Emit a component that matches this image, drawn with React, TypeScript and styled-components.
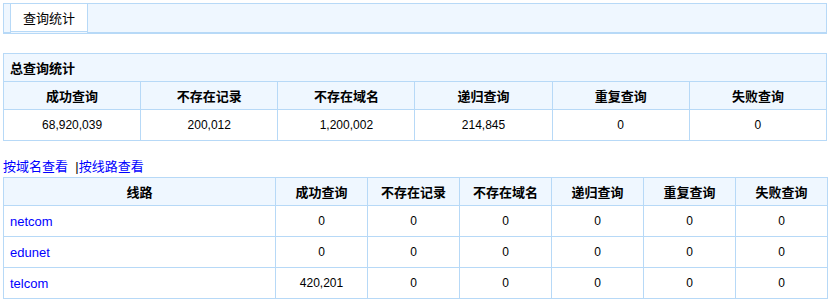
import React from "react";
import styled, { createGlobalStyle } from "styled-components";

const BORDER = "#b7d9f7";
const HEAD_BG = "#eff7ff";

const Global = createGlobalStyle`
  html, body { margin: 0; padding: 0; background: #fff; }
  body {
    font-family: "Liberation Sans", "Noto Sans CJK SC", sans-serif;
    font-size: 13px;
    color: #000;
  }
`;

const Page = styled.div`
  padding: 3px;
  width: 824px;
`;

const TabBar = styled.div`
  display: flex;
  border: 1px solid ${BORDER};
  background: ${HEAD_BG};
  height: 29px;
`;

const StripCell = styled.div<{ $w?: number; $grow?: boolean }>`
  flex: ${(p) => (p.$grow ? "1 1 auto" : `0 0 ${p.$w}px`)};
  height: 28px;
  border-bottom: 1px solid ${BORDER};
`;

const Tab = styled.div`
  flex: 0 0 76px;
  border-left: 1px solid ${BORDER};
  border-right: 1px solid ${BORDER};
  height: 30px;
`;

const TabLabel = styled.div`
  height: 27px;
  background: #fff;
  border-bottom: 1px solid ${BORDER};
  display: flex;
  align-items: center;
  justify-content: center;
  font-size: 13px;
`;

const Table = styled.table<{ $mt: number }>`
  margin-top: ${(p) => p.$mt}px;
  width: 824px;
  border-collapse: collapse;
  table-layout: fixed;
  border: 1px solid ${BORDER};
`;

const TitleCell = styled.td`
  background: ${HEAD_BG};
  border: 1px solid ${BORDER};
  height: 27px;
  padding: 0 0 0 6px;
  font-weight: bold;
  font-size: 13px;
  text-align: left;
`;

const Th = styled.th`
  background: ${HEAD_BG};
  border: 1px solid ${BORDER};
  height: 27px;
  padding: 0;
  font-weight: bold;
  font-size: 13px;
  text-align: center;
`;

const Td = styled.td<{ $left?: boolean }>`
  border: 1px solid ${BORDER};
  height: 30px;
  padding: 0 0 0 ${(p) => (p.$left ? "6px" : "0")};
  text-align: ${(p) => (p.$left ? "left" : "center")};
  font-size: 12px;
`;

const Link = styled.a`
  color: #0000ff;
  text-decoration: none;
  font-size: 13px;
  cursor: pointer;
`;

const LinkBar = styled.div`
  margin-top: 16px;
  height: 20px;
  line-height: 20px;
  font-size: 13px;
`;

const cols = ["成功查询", "不存在记录", "不存在域名", "递归查询", "重复查询", "失败查询"];
const totals = ["68,920,039", "200,012", "1,200,002", "214,845", "0", "0"];
const lines = [
  { name: "netcom", v: ["0", "0", "0", "0", "0", "0"] },
  { name: "edunet", v: ["0", "0", "0", "0", "0", "0"] },
  { name: "telcom", v: ["420,201", "0", "0", "0", "0", "0"] },
];

export default function App() {
  return (
    <>
      <Global />
      <Page>
        <TabBar>
          <StripCell $w={6} />
          <Tab>
            <TabLabel>查询统计</TabLabel>
          </Tab>
          <StripCell $grow />
        </TabBar>

        <Table $mt={19}>
          <tbody>
            <tr>
              <TitleCell colSpan={6}>总查询统计</TitleCell>
            </tr>
            <tr>
              {cols.map((c) => (
                <Th key={c}>{c}</Th>
              ))}
            </tr>
            <tr>
              {totals.map((t, i) => (
                <Td key={i}>{t}</Td>
              ))}
            </tr>
          </tbody>
        </Table>

        <LinkBar>
          <Link>按域名查看</Link>&nbsp; |<Link>按线路查看</Link>
        </LinkBar>

        <Table $mt={0}>
          <colgroup>
            <col style={{ width: 272 }} />
            {cols.map((c) => (
              <col key={c} style={{ width: 92 }} />
            ))}
          </colgroup>
          <tbody>
            <tr>
              <Th>线路</Th>
              {cols.map((c) => (
                <Th key={c}>{c}</Th>
              ))}
            </tr>
            {lines.map((l) => (
              <tr key={l.name}>
                <Td $left>
                  <Link>{l.name}</Link>
                </Td>
                {l.v.map((v, i) => (
                  <Td key={i}>{v}</Td>
                ))}
              </tr>
            ))}
          </tbody>
        </Table>
      </Page>
    </>
  );
}
